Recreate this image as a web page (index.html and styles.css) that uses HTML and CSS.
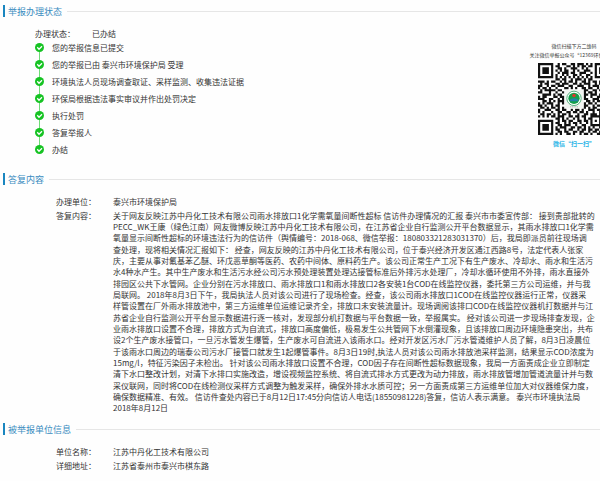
FILE: index.html
```html
<!DOCTYPE html>
<html lang="zh-CN">
<head>
<meta charset="utf-8">
<title>举报查询</title>
<link rel="stylesheet" href="styles.css">
</head>
<body>
<section class="block">
	<h2 class="headline">举报办理状态</h2>
	<div class="progress">
		<div class="state">
			<dl class="status">
				<dt>办理状态：</dt>
				<dd>已办结</dd>
			</dl>
			<ol class="steps">
				<li><svg class="tick" viewBox="0 0 18 18"><circle cx="9" cy="9" r="9"/><path d="M4.5 8.5l3.5 4 6-6"/></svg>您的举报信息已提交</li>
				<li><svg class="tick" viewBox="0 0 18 18"><circle cx="9" cy="9" r="9"/><path d="M4.5 8.5l3.5 4 6-6"/></svg>您的举报已由 泰兴市环境保护局 受理</li>
				<li><svg class="tick" viewBox="0 0 18 18"><circle cx="9" cy="9" r="9"/><path d="M4.5 8.5l3.5 4 6-6"/></svg>环境执法人员现场调查取证、采样监测、收集违法证据</li>
				<li><svg class="tick" viewBox="0 0 18 18"><circle cx="9" cy="9" r="9"/><path d="M4.5 8.5l3.5 4 6-6"/></svg>环保局根据违法事实审议并作出处罚决定</li>
				<li><svg class="tick" viewBox="0 0 18 18"><circle cx="9" cy="9" r="9"/><path d="M4.5 8.5l3.5 4 6-6"/></svg>执行处罚</li>
				<li><svg class="tick" viewBox="0 0 18 18"><circle cx="9" cy="9" r="9"/><path d="M4.5 8.5l3.5 4 6-6"/></svg>答复举报人</li>
				<li><svg class="tick" viewBox="0 0 18 18"><circle cx="9" cy="9" r="9"/><path d="M4.5 8.5l3.5 4 6-6"/></svg>办结</li>
			</ol>
		</div>
		<div class="wechat">
			<div>微信扫描下方二维码</div>
			<div>关注微信举报公众号“12369环保举报”</div>
			<svg class="qr" viewBox="0 0 33 33">
				<path id="modules"/>
				<rect x="12.3" y="12.3" width="8.4" height="8.4" rx="1" fill="#f2f5f2"/>
				<circle cx="16.5" cy="16.2" r="3.3" fill="#fff" stroke="#3ba56b" stroke-width=".4"/>
				<circle cx="16.5" cy="16.2" r="2.6" fill="#12a04c"/>
				<circle cx="16.5" cy="14.9" r=".8" fill="#e0352b"/>
				<path d="M14.6 16.8q1.9-1.3 3.8 0v.7h-3.8z" fill="#2580a8"/>
				<path d="M14.7 20.1h3.6" stroke="#999" stroke-width=".4" stroke-dasharray=".5 .3"/>
			</svg>
			<div class="scan">微信“扫一扫”</div>
		</div>
	</div>
</section>

<section class="block">
	<h2 class="headline">答复内容</h2>
	<dl class="info">
		<dt>办理单位：</dt>
		<dd>泰兴市环境保护局</dd>
		<dt>答复内容：</dt>
		<dd class="reply">
			<p>关于网友反映江苏中丹化工技术有限公司雨水排放口1化学需氧量间断性超标 信访件办理情况的汇报 泰兴市市委宣传部： 接到贵部批转的<br>
			PECC_WK王康（绿色江南）网友微博反映江苏中丹化工技术有限公司，在江苏省企业自行监测公开平台数据显示，其雨水排放口1化学需<br>
			氧量显示间断性超标的环境违法行为的信访件（舆情编号：2018-068、微信举报：180803321283031370）后，我局即派员前往现场调</p>
			<p>查处理，现将相关情况汇报如下： 经查，网友反映的江苏中丹化工技术有限公司，位于泰兴经济开发区通江西路8号，法定代表人张家<br>
			庆，主要从事对氟基苯乙醚、环戊恶草酮等医药、农药中间体、原料药生产。该公司正常生产工况下有生产废水、冷却水、雨水和生活污<br>
			水4种水产生。其中生产废水和生活污水经公司污水预处理装置处理达接管标准后外排污水处理厂，冷却水循环使用不外排，雨水直接外</p>
			<p>排园区公共下水管网。企业分别在污水排放口、雨水排放口1和雨水排放口2各安装1台COD在线监控仪器，委托第三方公司运维，并与我<br>
			局联网。 2018年8月3日下午，我局执法人员对该公司进行了现场检查。经查，该公司雨水排放口1COD在线监控仪器运行正常，仪器采<br>
			样管设置在厂外雨水排放池中，第三方运维单位运维记录齐全，排放口未安装流量计。现场调阅该排口COD在线监控仪器机打数据并与江</p>
			<p>苏省企业自行监测公开平台显示数据进行逐一核对，发现部分机打数据与平台数据一致，举报属实。 经对该公司进一步现场排查发现，企<br>
			业雨水排放口设置不合理，排放方式为自流式，排放口高度偏低，极易发生公共管网下水倒灌现象，且该排放口周边环境隐患突出，共布<br>
			设2个生产废水接管口，一旦污水管发生爆管，生产废水可自流进入该雨水口。经对开发区污水厂污水管道维护人员了解，8月3日凌晨位</p>
			<p>于该雨水口周边的瑞泰公司污水厂接管口就发生1起爆管事件。8月3日19时,执法人员对该公司雨水排放池采样监测，结果显示COD浓度为<br>
			15mg/l，特征污染因子未检出。 针对该公司雨水排放口设置不合理，COD因子存在间断性超标数据现象，我局一方面责成企业立即制定<br>
			清下水口整改计划，对清下水排口实施改造，增设视频监控系统、将自流式排水方式更改为动力排放，雨水排放管增加管道流量计并与数</p>
			<p>采仪联网，同时将COD在线检测仪采样方式调整为触发采样，确保外排水水质可控；另一方面责成第三方运维单位加大对仪器维保力度，<br>
			确保数据精准、有效。 信访件查处内容已于8月12日17:45分向信访人电话(18550981228)答复，信访人表示满意。 泰兴市环境执法局<br>
			2018年8月12日</p>
		</dd>
	</dl>
</section>

<section class="block">
	<h2 class="headline">被举报单位信息</h2>
	<dl class="info">
		<dt>单位名称：</dt>
		<dd>江苏中丹化工技术有限公司</dd>
		<dt>详细地址：</dt>
		<dd>江苏省泰州市泰兴市棋东路</dd>
	</dl>
</section>
<script src="qr.js"></script>
</body>
</html>
```

FILE: qr.js
```js
// one string per row, # is a dark module
var rows = [
	"#######..#.##..##.###.#.#.#######",
	"#.....#.##...##.#.#.##.##.#.....#",
	"#.###.#..##.#..###..#.#...#.###.#",
	"#.###.#.#.#.##..#.#..###..#.###.#",
	"#.###.#..#.###.##..###..#.#.###.#",
	"#.....#.#..#.#..##.#..##..#.....#",
	"#######.#.#.#.#.#.#.#.#.#.#######",
	"........##.##..#.###.#.##........",
	"###.#.##..#.#.##.#..##.#.##.#.##.",
	".#.##...##.###..##.#.###..#.##..#",
	"##..#.##.###..##..###..#.###..##.",
	"#.##.#..#...##.#.#..##.##..#.#.##",
	".#.#####.##..........##..##.##.#.",
	"##...#..#..#.........#.##.#..###.",
	"..####.#.##..........##.###.#..##",
	"#.##...##.##.........#..#..##.#..",
	"###..##..#.#.........##..###..##.",
	"..##.#.#.###..........##.#.##.###",
	"#.#.###..#.#.........#.##.#..#.#.",
	"##.#..#.##...........##..#.###..#",
	".##.#.##.#.#.........#.#.##..##.#",
	"#..###..##.##..#.##.#..###.##.#..",
	"#.#...#..##..##.##.##.#..#..##.##",
	".##.##.#.#.##.#...#..##.###.#..#.",
	"#.#.#.##.###..##.##.##..#####.##.",
	"........##.#.#..#.#..#.##...#.#.#",
	"#######..#.##.##..##.##.#.#.##..#",
	"#.....#.##..#.#.##.#..#.#...#.##.",
	"#.###.#..##.###..#..##..######.##",
	"#.###.#.#.###..##.##.#.#.#..##.#.",
	"#.###.#.##..#.##..#.##.##.##..##.",
	"#.....#..##.##..##.##..#.##.##..#",
	"#######.#.#..##.#..#.##.#..##.##."
];

var d = "";
for (var y = 0; y < rows.length; y++)
{
	for (var x = 0; x < rows[y].length; x++)
	{
		if (rows[y][x] == "#")
		{
			d += "M" + x + " " + y + "h1v1h-1z";
		}
	}
}
document.getElementById("modules").setAttribute("d", d);
```

FILE: styles.css
```css
*{
	box-sizing: border-box;
	margin: 0;
	padding: 0;
}

body{
	padding-top: 5px;
	overflow-x: hidden;
	background-color: #fefefe;
	color: #333333;
	font-family: "Noto Sans CJK SC", sans-serif;
	font-size: 8px;
	line-height: 11px;
	white-space: nowrap;
}

.block{
	margin-bottom: 10px;
}

.headline{
	display: flex;
	align-items: center;
	gap: 5px;
	height: 12px;
	margin: 0 0 11px 3px;
	padding-left: 3px;
	border-left: 2px solid #1a86c0;
	color: #3a8cc0;
	font-size: 9px;
	font-weight: normal;
}

.headline::after{
	content: "";
	flex: 1;
	height: 1px;
	background-color: #e6e6e6;
}

.progress{
	display: flex;
	justify-content: space-between;
	align-items: flex-start;
	padding-bottom: 5px;
}

.state{
	padding-left: 35px;
}

.status{
	display: grid;
	grid-template-columns: 57px auto;
}

.steps{
	list-style: none;
}

.steps li{
	display: flex;
	align-items: center;
	gap: 8px;
	height: 17px;
	background: linear-gradient(#6fdc77, #6fdc77) 4px 0 / 1px 100% no-repeat;
}

.steps li:first-child{
	background-position: 4px 8px;
}

.steps li:last-child{
	background-size: 1px 50%;
}

.tick{
	width: 9px;
	height: 9px;
	fill: #16c323;
}

.tick path{
	fill: none;
	stroke: #ffffff;
	stroke-width: 2.5;
}

.wechat{
	display: flex;
	flex-direction: column;
	align-items: center;
	width: 72px;
	margin: 13px -10px 0 0;
	font-family: "Noto Sans CJK SC", serif;
	font-size: 5px;
	line-height: 9px;
}

.qr{
	width: 72px;
	height: 72px;
	margin: 4px 0;
	fill: #111111;
}

.scan{
	color: #27b3e6;
	font-size: 6px;
	font-weight: bold;
}

.info{
	display: grid;
	grid-template-columns: 57px auto;
	row-gap: 3px;
	padding-left: 56px;
}

.reply{
	display: flex;
	flex-direction: column;
	gap: 1px;
}
```
